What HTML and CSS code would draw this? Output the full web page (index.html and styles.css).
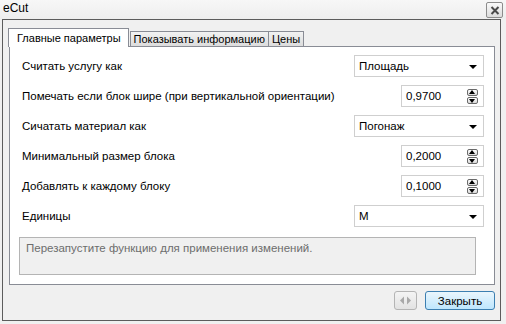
FILE: index.html
```html
<!DOCTYPE html>
<html lang="ru">
<head>
  <meta charset="UTF-8">
  <title>eCut</title>
  <link rel="stylesheet" href="styles.css">
</head>
<body>
  <div class="titlebar">
    <span class="title">eCut</span>
    <button class="close-x">
      <svg width="10" height="9" viewBox="0 0 10 9"><path d="M1.5 1 L8.5 8 M8.5 1 L1.5 8" stroke="#4a4a4a" stroke-width="2"/></svg>
    </button>
  </div>
  <div class="frame">
    <div class="tabs">
      <div class="tab active">Главные параметры</div>
      <div class="tab">Показывать информацию</div>
      <div class="tab">Цены</div>
    </div>
    <div class="panel">
      <div class="row">
        <span>Считать услугу как</span>
        <div class="select"><span>Площадь</span><i class="caret"></i></div>
      </div>
      <div class="row">
        <span>Помечать если блок шире (при вертикальной ориентации)</span>
        <div class="spin"><span>0,9700</span><b class="arrows"><i class="up"></i><i class="down"></i></b></div>
      </div>
      <div class="row">
        <span>Сичатать материал как</span>
        <div class="select"><span>Погонаж</span><i class="caret"></i></div>
      </div>
      <div class="row">
        <span>Минимальный размер блока</span>
        <div class="spin"><span>0,2000</span><b class="arrows"><i class="up"></i><i class="down"></i></b></div>
      </div>
      <div class="row">
        <span>Добавлять к каждому блоку</span>
        <div class="spin"><span>0,1000</span><b class="arrows"><i class="up"></i><i class="down"></i></b></div>
      </div>
      <div class="row">
        <span>Единицы</span>
        <div class="select"><span>М</span><i class="caret"></i></div>
      </div>
      <div class="message">Перезапустите функцию для применения изменений.</div>
    </div>
    <div class="footer">
      <button class="nav">
        <svg width="13" height="9" viewBox="0 0 13 9"><path d="M5 0.5 L1 4.5 L5 8.5 Z M8 0.5 L12 4.5 L8 8.5 Z" fill="#a8a8a8"/></svg>
      </button>
      <button class="primary">Закрыть</button>
    </div>
  </div>
</body>
</html>
```

FILE: styles.css
```css
body {
  margin: 0;
  width: 506px;
  height: 324px;
  background: #f0f0f0;
  font-family: "Liberation Sans", Arial, sans-serif;
  font-size: 11.5px;
  color: #000;
  overflow: hidden;
}
.titlebar {
  height: 19px;
  display: flex;
  justify-content: space-between;
  align-items: flex-start;
  padding: 0 3px 0 3px;
  background: linear-gradient(#f7f7f7, #eeeeee);
}
.title {
  font-size: 12px;
  line-height: 16px;
}
.close-x {
  margin-top: 2px;
  width: 17px;
  height: 16px;
  padding: 0;
  display: flex;
  align-items: center;
  justify-content: center;
  border: 1px solid #8c8c8c;
  border-radius: 2px;
  background: linear-gradient(#fafafa, #dcdcdc);
}
.frame {
  box-sizing: border-box;
  margin-left: 2px;
  width: 499px;
  height: 302px;
  border: 1px solid #5c5c5c;
  padding: 8px 5px 0 6px;
}
.tabs {
  display: flex;
  height: 18px;
  margin-left: -1px;
  position: relative;
  z-index: 1;
  font-size: 11px;
}
.tab {
  box-sizing: border-box;
  height: 15px;
  margin-top: 3px;
  padding: 0 3px;
  line-height: 14px;
  border: 1px solid #898c95;
  border-bottom: none;
  background: linear-gradient(#f2f2f2, #dcdcdc);
  white-space: nowrap;
}
.tab + .tab {
  margin-left: -1px;
}
.tab.active {
  height: 19px;
  margin-top: 0;
  padding: 0 7px 0 8px;
  line-height: 18px;
  background: #fff;
}
.tab.active + .tab {
  margin-left: 1px;
}
.panel {
  box-sizing: border-box;
  height: 239px;
  background: #fff;
  border: 1px solid #898c95;
  padding: 8px 10px 0 12px;
  display: flex;
  flex-direction: column;
  gap: 8px;
}
.row {
  height: 22px;
  display: flex;
  justify-content: space-between;
  align-items: center;
}
.select,
.spin {
  box-sizing: border-box;
  height: 22px;
  border: 1px solid #cfcfcf;
  display: flex;
  align-items: center;
  background: #fff;
}
.select {
  width: 130px;
  padding: 0 6px 0 4px;
  justify-content: space-between;
}
.caret {
  width: 0;
  height: 0;
  border-left: 4px solid transparent;
  border-right: 4px solid transparent;
  border-top: 4px solid #000;
  margin-top: 1px;
}
.spin {
  width: 83px;
  padding: 0 5px 0 4px;
  justify-content: space-between;
}
.arrows {
  display: flex;
  flex-direction: column;
  gap: 1px;
}
.arrows i {
  box-sizing: border-box;
  width: 11px;
  height: 7px;
  border: 1px solid #6a6a6a;
  border-radius: 2px;
  background: linear-gradient(#ffffff, #d8d8d8);
  position: relative;
}
.arrows i::after {
  content: "";
  position: absolute;
  left: 1px;
  border-left: 3.5px solid transparent;
  border-right: 3.5px solid transparent;
}
.arrows .up::after {
  top: 0;
  border-bottom: 4px solid #000;
}
.arrows .down::after {
  top: 1px;
  border-top: 4px solid #000;
}
.message {
  box-sizing: border-box;
  margin: 2px 8px 0 -3px;
  height: 38px;
  padding: 4px 6px;
  border: 1px solid #b4b4b4;
  background: #f0f0f0;
  color: #6d6d6d;
}
.footer {
  display: flex;
  justify-content: flex-end;
  align-items: center;
  gap: 8px;
  padding-top: 6px;
}
.footer button {
  box-sizing: border-box;
  height: 19px;
  padding: 0;
  font-family: inherit;
  font-size: 11.5px;
  border-radius: 3px;
}
.nav {
  width: 23px;
  display: flex;
  align-items: center;
  justify-content: center;
  border: 1px solid #b4b4b4;
  background: linear-gradient(#f4f4f4, #e2e2e2);
}
.primary {
  width: 70px;
  border: 1px solid #3c7fb1;
  background: linear-gradient(#eaf6fd, #bee6fd);
  color: #000;
}
```
